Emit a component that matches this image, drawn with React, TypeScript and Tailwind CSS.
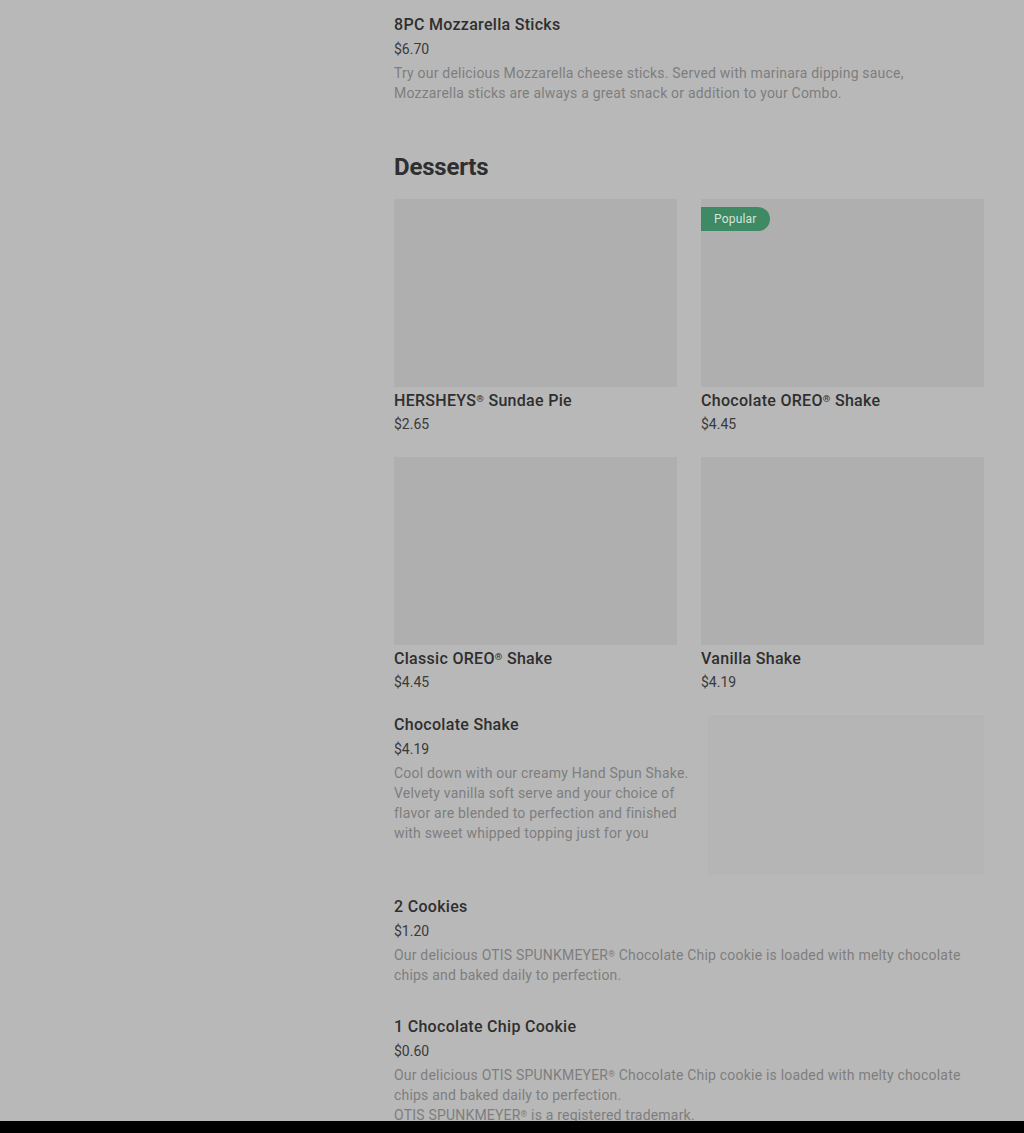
import React from 'react';

// menu data for the desserts section
const cards = [
  { name: 'HERSHEYS', mark: true, rest: ' Sundae Pie', price: '$2.65', popular: false },
  { name: 'Chocolate OREO', mark: true, rest: ' Shake', price: '$4.45', popular: true },
  { name: 'Classic OREO', mark: true, rest: ' Shake', price: '$4.45', popular: false },
  { name: 'Vanilla Shake', mark: false, rest: '', price: '$4.19', popular: false },
];

// small raised ® that doesn't grow the line box
const Reg = () => <span className="relative -top-[0.4em] text-[0.6em] leading-none">®</span>;

const cookieDesc = (
  <>
    Our delicious OTIS SPUNKMEYER<Reg /> Chocolate Chip cookie is loaded with melty chocolate chips and baked daily to
    perfection.
  </>
);

function ItemText({
  name,
  price,
  desc,
  tight,
}: {
  name: React.ReactNode;
  price: string;
  desc?: React.ReactNode;
  tight?: boolean;
}) {
  return (
    <div>
      <h3 className="text-[16px] leading-6 font-medium text-[#2f2f2f] tracking-[0.3px]">{name}</h3>
      <div className={`${tight ? 'mt-px' : 'mt-[2px]'} text-[14px] leading-5 text-[#3a3a3a]`}>{price}</div>
      {desc && <p className="mt-[4px] text-[14px] leading-5 text-[#7e7e7e] tracking-[0.2px]">{desc}</p>}
    </div>
  );
}

export default function App() {
  return (
    <div
      className="h-[1133px] w-full flex flex-col bg-[#b8b8b8] overflow-hidden"
      style={{ fontFamily: 'Roboto, "Liberation Sans", sans-serif' }}
    >
      <div className="flex-1 overflow-hidden">
        <div className="ml-[394px] w-[590px] pt-[13px]">
          <ItemText
            name="8PC Mozzarella Sticks"
            price="$6.70"
            desc={
              <>
                Try our delicious Mozzarella cheese sticks. Served with marinara dipping sauce,
                <br />
                Mozzarella sticks are always a great snack or addition to your Combo.
              </>
            }
          />

          <h2 className="mt-12 text-[24px] leading-8 font-bold text-[#2f2f2f] tracking-[-0.2px]">Desserts</h2>

          <div className="mt-4 grid grid-cols-2 gap-x-6 gap-y-[23px]">
            {cards.map((c) => (
              <div key={c.name}>
                <div className="relative h-[188px] bg-[#afafaf]">
                  {c.popular && (
                    <span className="absolute left-0 top-2 h-6 px-[13px] flex items-center rounded-r-full bg-[#3d8a64] text-[12px] tracking-[0.2px] text-[#d6e4da]">
                      Popular
                    </span>
                  )}
                </div>
                <div className="mt-[2px]">
                  <ItemText
                    tight
                    name={
                      <>
                        {c.name}
                        {c.mark && <Reg />}
                        {c.rest}
                      </>
                    }
                    price={c.price}
                  />
                </div>
              </div>
            ))}
          </div>

          <div className="mt-[21px] flex justify-between">
            <div className="w-[297px]">
              <ItemText
                name="Chocolate Shake"
                price="$4.19"
                desc="Cool down with our creamy Hand Spun Shake. Velvety vanilla soft serve and your choice of flavor are blended to perfection and finished with sweet whipped topping just for you"
              />
            </div>
            <div className="w-[276px] h-[162px] bg-[#b5b5b5] border-t-2 border-[#bababa]" />
          </div>

          <div className="mt-5">
            <ItemText name="2 Cookies" price="$1.20" desc={cookieDesc} />
          </div>

          <div className="mt-[30px]">
            <ItemText
              name="1 Chocolate Chip Cookie"
              price="$0.60"
              desc={
                <>
                  {cookieDesc}
                  <br />
                  OTIS SPUNKMEYER<Reg /> is a registered trademark.
                </>
              }
            />
          </div>
        </div>
      </div>
      <div className="h-3 bg-black shrink-0" />
    </div>
  );
}
